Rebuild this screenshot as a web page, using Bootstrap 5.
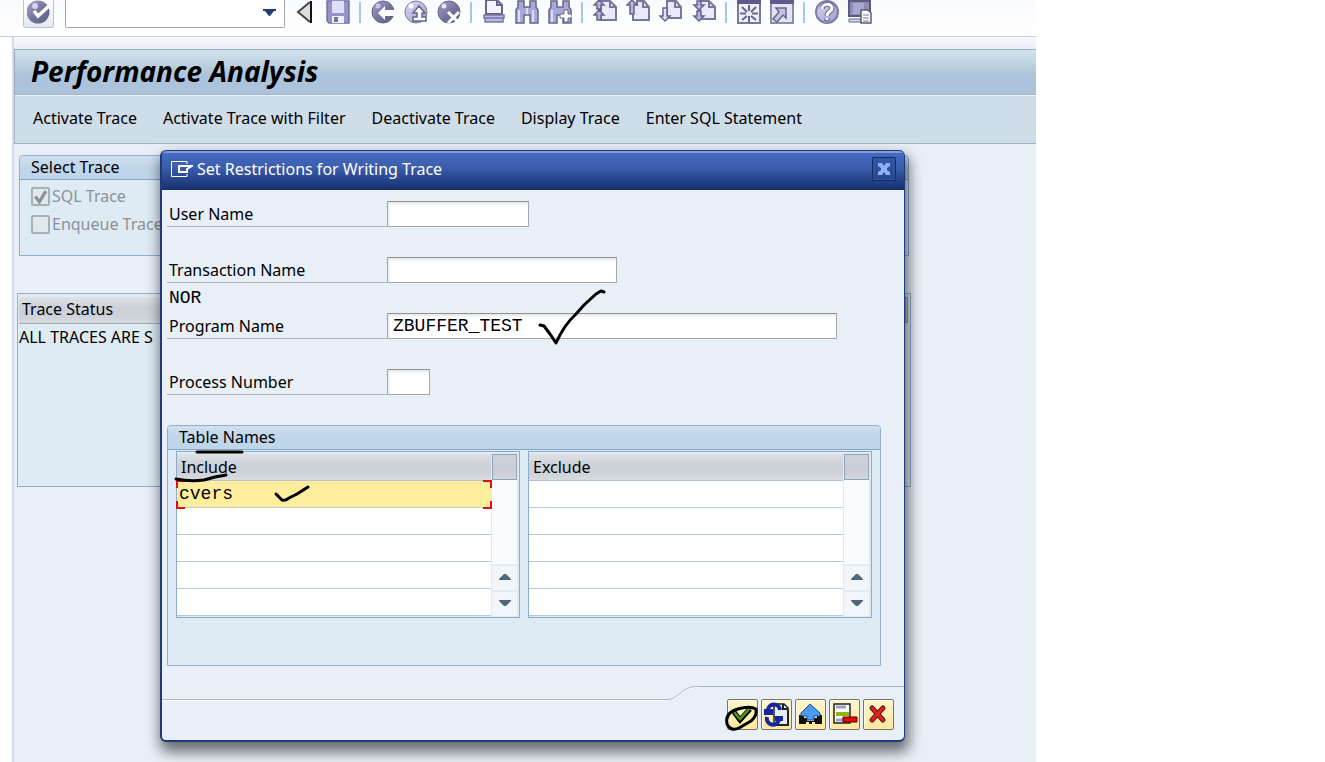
<!DOCTYPE html>
<html lang="en">
<head>
<meta charset="utf-8">
<meta name="viewport" content="width=device-width, initial-scale=1">
<title>Performance Analysis</title>
<link href="https://cdn.jsdelivr.net/npm/bootstrap@5.3.0/dist/css/bootstrap.min.css" rel="stylesheet">
<style>
  body { font: 16px/24px "Noto Sans", sans-serif; color: #000; background: #fff; }
  button { color: inherit; }
  .app-window { max-width: 1036px; min-height: 100vh; background: #fff; }
  .mono { font-family: "Liberation Mono", monospace; font-size: 18px; }

  /* system toolbar */
  .sys-bar { height: 37px; padding: 0 0 9px 23px; border-bottom: 1px solid #c5cfdf; background: linear-gradient(#f8fafd, #fff); }
  .tool { width: 33px; height: 28px; padding: 0 0 4px; border: 0; border-radius: 0; }
  .tool svg { width: 24px; height: 24px; display: block; margin: auto; }
  .ok-tool { width: 31px; border: 1px solid #b9c3d6; border-top: 0; border-radius: 0 0 3px 3px; background: linear-gradient(#fff, #e4eaf3); }
  .tool-sep { width: 2px; height: 21px; margin: 2px 5px 0; background: #a4c8e4; }
  .command { width: 220px; height: 28px; margin: 0 3px 0 11px; border: 1px solid #a3a6ac; border-top: 0; border-radius: 0 0 2px 2px; background: #fff; }
  .command input { min-width: 0; border: 0; outline: 0; background: none; }
  .command .btn { width: 29px; padding: 0 4px 4px 0; border: 0; line-height: 20px; }

  /* work area */
  .work { margin-left: 12px; border-left: 2px solid #d3dbe7; background: #e8eff6; }
  .work-edge { height: 12px; background: linear-gradient(#f6f9fc, #e9eff6); }
  .title-bar { height: 45px; padding-left: 16px; border-top: 1px solid #98aac2; border-left: 1px solid #98aac2; background: linear-gradient(#d3e2ee, #b4cad9 48%, #adc4dd 55%, #adc2db); }
  .title-bar h1 { font-size: 28px; line-height: 42px; font-weight: 700; font-style: italic; }
  .app-bar { height: 50px; padding: 0 0 2px 5px; border: 1px solid #a3b3ca; border-right: 0; background: #cfdde8; box-shadow: inset 0 1px #eef4f9; }
  .app-bar .btn { padding: 0 13px; border: 0; color: #000; font-size: 16px; line-height: 24px; }

  .group { border: 1px solid #92afcd; border-radius: 4px 4px 0 0; background: #deebf4; }
  .group-title { height: 24px; padding-left: 11px; border-bottom: 1px solid #86a5c6; border-radius: 4px 4px 0 0; background: linear-gradient(#cfdff0, #c0d6ea 50%, #bfd5e9); font-size: 16px; line-height: 23px; }
  .select-trace { height: 101px; margin: 11px 127px 0 5px; }
  .select-trace .form-check { height: 28px; margin: 0; padding: 0 0 0 11px; }
  .select-trace .form-check-input { float: none; width: 19px; height: 19px; margin: 0 0 2px; border: 2px solid #a9afb5; border-radius: 2px; background-color: #dfe8ef; }
  .select-trace .form-check-input:disabled { opacity: 1; }
  .select-trace .form-check-input:checked { background-size: 17px; background-image: url("data:image/svg+xml,%3Csvg xmlns='http://www.w3.org/2000/svg' viewBox='0 0 16 16'%3E%3Cpath d='M3 8l4 5 6-10' fill='none' stroke='%238b9095' stroke-width='3'/%3E%3C/svg%3E"); }
  .select-trace .form-check-input:disabled ~ .form-check-label { color: #8b9197; opacity: 1; padding-left: 2px; }
  .trace-status { height: 194px; margin: 37px 125px 0 3px; padding: 3px 2px 3px 1px; border: 1px solid #92afcd; }
  .list-head { background: linear-gradient(#dfe1e3, #cdd2da 40%, #cdd2da 70%, #d6dbde); font-weight: 400; }
  .trace-status .list-head { height: 26px; padding: 0 3px; border-bottom: 1px solid #9aa9bc; line-height: 25px; }
  .trace-status td { padding: 0; line-height: 26px; }
  .status-corner { width: 3px; height: 26px; border: 1px solid #92a2b4; background: #cbd1d9; }

  /* dialog */
  .restrict { left: 160px; top: 150px; width: 745px; border: 2px solid #20397a; border-width: 0 1px 2px 2px; border-radius: 6px; background: #e8eff6; box-shadow: 2px 8px 14px 2px rgba(0,0,0,.55); }
  .restrict-head { height: 40px; padding: 0 8px 4px 9px; border-top: 1px solid #1f3878; border-radius: 5px 5px 0 0; color: #fff; background: linear-gradient(#7e9fdc 2px, #456bc0 2px, #3b5eae 16px, #27468c 28px, #17306c); }
  .restrict-head h2 { font-size: 16px; line-height: 34px; padding-left: 4px; }
  .close-tool { width: 24px; height: 24px; padding: 0; border: 1px solid #142b66; border-radius: 1px; background: linear-gradient(#3558a6, #27458b); box-shadow: inset 0 0 0 1px #3154a2; }
  .restrict-form { padding: 11px 23px 0 5px; }
  .line { height: 28px; }
  .line label { width: 220px; height: 26px; padding-left: 2px; border-bottom: 1px solid #b1b4b7; line-height: 26px; }
  .line input { height: 26px; padding: 0 5px; border: 1px solid #a5a8ab; border-top-color: #8f9396; border-radius: 0; background: #fff; box-shadow: inset 1px 2px 2px #e6e8ea; outline: 0; }
  .line span { padding-left: 2px; }
  .line + .line.gap-line { margin-top: 28px; }
  .w-user { width: 142px; } .w-trans { width: 230px; } .w-prog { width: 450px; } .w-proc { width: 43px; }
  .tables { height: 241px; margin-top: 28px; }
  .tables-row { gap: 8px; padding: 1px 8px 0; }
  .list { height: 167px; padding: 2px 2px 1px 0; border: 1px solid #8fabca; }
  .list table { border-collapse: separate; border-spacing: 0; }
  .list th { height: 27px; padding: 0 4px; border-bottom: 1px solid #b6c1d1; line-height: 26px; }
  .list td { height: 27px; padding: 0; border-bottom: 1px solid #bcc7d6; background: #fff; }
  .list td input { display: block; width: 100%; height: 26px; padding: 0 2px; border: 0; outline: 0; background: none; }
  .list td.active-cell { background: #ffed9e; }
  .focus-marks { inset: -1px -1px -2px -1px; pointer-events: none;
    background:
      linear-gradient(#e20d0d 0 0) 0 0/9px 2px, linear-gradient(#e20d0d 0 0) 0 0/2px 8px,
      linear-gradient(#e20d0d 0 0) 100% 0/9px 2px, linear-gradient(#e20d0d 0 0) 100% 0/2px 8px,
      linear-gradient(#e20d0d 0 0) 0 100%/9px 2px, linear-gradient(#e20d0d 0 0) 0 100%/2px 8px,
      linear-gradient(#e20d0d 0 0) 100% 100%/9px 2px, linear-gradient(#e20d0d 0 0) 100% 100%/2px 8px;
    background-repeat: no-repeat; }
  .scroll { width: 25px; margin-left: 1px; background: #f8fafc; }
  .scroll .btn { height: 26px; padding: 0 0 2px; border: 0; border-top: 2px solid #e3ecf5; border-radius: 0; background: #f2f5fa; }
  .scroll .btn svg { display: block; margin: auto; }
  .scroll .corner { border: 1px solid #93a1b4; background: linear-gradient(#cfd3d9, #c8cdd5 60%, #d2d7db); }
  .shelf { height: 14px; margin-top: 20px; }
  .shelf-low { border-bottom: 1px solid #a9b7cc; box-shadow: 0 1px #fff; }
  .shelf-high { width: 204px; border-top: 1px solid #a9b7cc; }
  .actions { gap: 3px; padding: 0 10px 10px 0; margin-top: -1px; }
  .action { width: 31px; height: 31px; padding: 0; border: 1px solid #77756c; border-radius: 2px; background: linear-gradient(#fff6cf, #ffe89b); box-shadow: inset 1px 1px #fffbe6; }
  .action svg { width: 27px; height: 27px; display: block; margin: auto; }
  .ink { left: -2px; top: 0; width: 745px; height: 592px; pointer-events: none; }
</style>
</head>
<body>
<svg class="position-absolute" width="0" height="0" aria-hidden="true">
  <defs>
    <linearGradient id="orb" x1="0" y1="0" x2="1" y2="1"><stop offset="0" stop-color="#a5a6d3"/><stop offset=".5" stop-color="#77779f"/><stop offset="1" stop-color="#5d5d80"/></linearGradient>
    <linearGradient id="pale" x1="0" y1="0" x2="1" y2="1"><stop offset="0" stop-color="#d9d9fb"/><stop offset="1" stop-color="#9a9ac8"/></linearGradient>
  </defs>
</svg>
<div class="app-window position-relative d-flex flex-column overflow-hidden">
  <header class="sys-bar d-flex align-items-start">
    <button class="btn tool ok-tool" aria-label="Enter"><svg viewBox="0 0 24 24"><circle cx="11" cy="12" r="11.500" fill="url(#orb)"/><circle cx="8" cy="6" r="3" fill="#d4d4ef"/><path d="M7 11l4 5L22 6" fill="none" stroke="#fff" stroke-width="3.500"/></svg></button>
    <div class="command d-flex">
      <input class="flex-grow-1" type="text" aria-label="Command">
      <button class="btn" aria-label="History"><svg width="13" height="8" viewBox="0 0 13 8"><path d="M0 0h13v2h-2L7 7H6L2 2H0z" fill="#253c77"/></svg></button>
    </div>
    <button class="btn tool" aria-label="Collapse"><svg viewBox="0 0 24 24"><path d="M17 2v20L5 12z" fill="#ddd"/><path d="M18 1v22" stroke="#111" stroke-width="2"/><path d="M17 2L5 12l12 10" fill="none" stroke="#444" stroke-width="2"/></svg></button>
    <button class="btn tool" aria-label="Save"><svg viewBox="0 0 24 24"><path d="M1 1h22v22H3l-2-2z" fill="#9494c4" stroke="#73739c" stroke-width="1.500"/><path d="M6 1h12v12H6z" fill="#dedefa"/><path d="M6 16h12v7H6z" fill="#eeeefc"/><path d="M8 17h4v5H8z" fill="#73739c"/></svg></button>
    <span class="tool-sep"></span>
    <button class="btn tool" aria-label="Back"><svg viewBox="0 0 24 24"><circle cx="12" cy="12" r="11" fill="url(#orb)" stroke="#66668a"/><circle cx="7" cy="6" r="2.500" fill="#c8c8ef"/><path d="M7 13l7-7v4h10v6H14v4z" fill="#fff"/></svg></button>
    <button class="btn tool" aria-label="Exit"><svg viewBox="0 0 24 24"><circle cx="12" cy="12" r="11" fill="url(#pale)" stroke="#7c7ca4"/><circle cx="7" cy="6" r="2.500" fill="#fff"/><path d="M15 6l6 7h-3v4h4v4H9v-4h4v-4H9z" fill="#fff" stroke="#66668a" stroke-width="1.500"/></svg></button>
    <button class="btn tool" aria-label="Cancel"><svg viewBox="0 0 24 24"><circle cx="12" cy="12" r="11" fill="url(#orb)" stroke="#66668a"/><circle cx="7" cy="6" r="2.500" fill="#e5e5fa"/><path d="M11 12l11 11M22 12L11 23" stroke="#fff" stroke-width="3"/></svg></button>
    <span class="tool-sep"></span>
    <button class="btn tool" aria-label="Print"><svg viewBox="0 0 24 24"><path d="M4 0h11l5 5v9H4z" fill="#f4f4fe" stroke="#66668a" stroke-width="2"/><path d="M15 0v5h5" fill="none" stroke="#66668a" stroke-width="2"/><path d="M2 15h20v3H2zM3 18h18v4H3z" fill="#b8b8e6" stroke="#77779f" stroke-width="1.500"/></svg></button>
    <button class="btn tool" aria-label="Find"><svg viewBox="0 0 24 24"><path d="M3 1h6v6h6V1h6v6l2 3v13h-8v-8H9v8H1V10l2-3z" fill="#a9a9d8" stroke="#66668a" stroke-width="1.500"/><path d="M4 10v12M12 8v6M18 10v12" stroke="#dcdcfa" stroke-width="2"/></svg></button>
    <button class="btn tool" aria-label="Find next"><svg viewBox="0 0 24 24"><path d="M3 1h6v6h6V1h6v6l2 3v13h-8v-8H9v8H1V10l2-3z" fill="#a9a9d8" stroke="#66668a" stroke-width="1.500"/><path d="M4 10v12" stroke="#dcdcfa" stroke-width="2"/><path d="M16 10h4v4h4v4h-4v4h-4v-4h-4v-4h4z" fill="#fff" stroke="#66668a"/></svg></button>
    <span class="tool-sep"></span>
    <button class="btn tool" aria-label="First page"><svg viewBox="0 0 24 24"><path d="M8 1h9l6 6v13H8z" fill="#e9e9fc" stroke="#77779f" stroke-width="2"/><path d="M17 1v6h6" fill="none" stroke="#77779f" stroke-width="2"/><path d="M6 0l5 5H8v4H4V5H1zM6 10l5 5H8v5H4v-5H1z" fill="#b5b5e0" stroke="#66668a" stroke-width="1.500"/></svg></button>
    <button class="btn tool" aria-label="Previous page"><svg viewBox="0 0 24 24"><path d="M7 4h4V1h7l5 6v13H7z" fill="#e9e9fc" stroke="#77779f" stroke-width="2"/><path d="M17 1v6h6" fill="none" stroke="#77779f" stroke-width="2"/><path d="M6 0l5 5H8v9H4V5H1z" fill="#b5b5e0" stroke="#66668a" stroke-width="1.500"/></svg></button>
    <button class="btn tool" aria-label="Next page"><svg viewBox="0 0 24 24"><path d="M8 1h9l5 6v11H8z" fill="#e9e9fc" stroke="#77779f" stroke-width="2"/><path d="M16 1v6h6" fill="none" stroke="#77779f" stroke-width="2"/><path d="M6 21l5-5H8V8H4v8H1z" fill="#e2e2fa" stroke="#66668a" stroke-width="1.500"/></svg></button>
    <button class="btn tool" aria-label="Last page"><svg viewBox="0 0 24 24"><path d="M8 1h9l6 6v12H8z" fill="#e9e9fc" stroke="#77779f" stroke-width="2"/><path d="M17 1v6h6" fill="none" stroke="#77779f" stroke-width="2"/><path d="M7 10l5-5H9V1H5v4H2zM7 21l5-5H9v-5H5v5H2z" fill="#b5b5e0" stroke="#66668a" stroke-width="1.500"/></svg></button>
    <span class="tool-sep"></span>
    <button class="btn tool" aria-label="New session"><svg viewBox="0 0 24 24"><path d="M1 1h22v22H1z" fill="#eeeef8" stroke="#77779f" stroke-width="2"/><path d="M0 0h24v4H0z" fill="#5c5c8c"/><path d="M12 5v6M12 16v6M3 13.500h6M15 13.500h6M5 7l5 5M19 7l-5 5M5 20l5-4M19 20l-5-4" stroke="#66668a" stroke-width="2"/></svg></button>
    <button class="btn tool" aria-label="Shortcut"><svg viewBox="0 0 24 24"><path d="M1 1h22v22H1z" fill="#e3e3f3" stroke="#8c8cae" stroke-width="2"/><path d="M0 0h24v4H0z" fill="#5c5c8c"/><path d="M6 8h10v10l-3-3-6 7-4-3 6-7z" fill="#c2c2e4" stroke="#66668a" stroke-width="1.500"/></svg></button>
    <span class="tool-sep"></span>
    <button class="btn tool" aria-label="Help"><svg viewBox="0 0 24 24"><circle cx="12" cy="12" r="11" fill="url(#pale)" stroke="#7c7ca4" stroke-width="2"/><path d="M7 9c0-6 10-6 10-1 0 4-5 3-5 8M12 18v3" fill="none" stroke="#66668a" stroke-width="5"/><path d="M7 9c0-6 10-6 10-1 0 4-5 3-5 8M12 18v2" fill="none" stroke="#fff" stroke-width="3"/></svg></button>
    <button class="btn tool" aria-label="Layout"><svg viewBox="0 0 24 24"><path d="M1 1h21v15H1z" fill="#8d8db8" stroke="#5b5b80" stroke-width="2"/><path d="M5 3h11v11H5z" fill="#a8a8d2"/><path d="M1 19h12v3H1z" fill="#d5d5ed" stroke="#66668a"/><path d="M13 10h7l3 3v10H13z" fill="#fff" stroke="#5b5b70" stroke-width="1.500"/><path d="M15 15h6M15 18h6M15 21h6" stroke="#77778c"/></svg></button>
  </header>

  <main class="work flex-grow-1">
    <div class="work-edge"></div>
    <div class="title-bar"><h1 class="m-0">Performance Analysis</h1></div>
    <nav class="app-bar d-flex align-items-center" aria-label="Trace">
      <button class="btn">Activate Trace</button>
      <button class="btn">Activate Trace with Filter</button>
      <button class="btn">Deactivate Trace</button>
      <button class="btn">Display Trace</button>
      <button class="btn">Enter SQL Statement</button>
    </nav>
    <section class="group select-trace">
      <h2 class="group-title m-0 fw-normal">Select Trace</h2>
      <div class="select-options">
        <div class="form-check d-flex align-items-end"><input class="form-check-input" type="checkbox" id="sql" checked disabled><label class="form-check-label" for="sql">SQL Trace</label></div>
        <div class="form-check d-flex align-items-end"><input class="form-check-input" type="checkbox" id="enq" disabled><label class="form-check-label" for="enq">Enqueue Trace</label></div>
      </div>
    </section>
    <section class="group rounded-0 trace-status d-flex">
      <table class="w-100 align-self-start">
        <thead><tr><th class="list-head">Trace Status</th></tr></thead>
        <tbody><tr><td>ALL TRACES ARE S</td></tr></tbody>
      </table>
      <span class="status-corner"></span>
    </section>
  </main>

  <section class="restrict position-absolute" role="dialog" aria-labelledby="dlg-title">
    <header class="restrict-head d-flex align-items-center">
      <svg width="22" height="16" viewBox="0 0 22 16" fill="none" stroke="#fff"><path d="M16 3V.5H.5v15H16V13"/><path d="M8 5h13l-5 3v3H8z" stroke-width="2"/></svg>
      <h2 id="dlg-title" class="m-0 fw-normal flex-grow-1">Set Restrictions for Writing Trace</h2>
      <button class="btn close-tool d-flex align-items-center justify-content-center" aria-label="Close"><svg width="12" height="12" viewBox="0 0 12 12"><path d="M0 0h4l2 3 2-3h4v3L9 5v2l3 2v3H8L6 9l-2 3H0V9l3-2V5L0 3z" fill="#8fb0fa"/></svg></button>
    </header>
    <form class="restrict-form">
      <div class="line d-flex"><label for="user">User Name</label><input class="mono w-user" id="user" type="text"></div>
      <div class="line gap-line d-flex"><label for="trans">Transaction Name</label><input class="mono w-trans" id="trans" type="text"></div>
      <div class="line"><span class="mono">NOR</span></div>
      <div class="line d-flex"><label for="prog">Program Name</label><input class="mono w-prog" id="prog" type="text" value="ZBUFFER_TEST"></div>
      <div class="line gap-line d-flex"><label for="proc">Process Number</label><input class="mono w-proc" id="proc" type="text"></div>

      <section class="group tables">
        <h3 class="group-title m-0 fw-normal">Table Names</h3>
        <div class="tables-row d-flex">
          <div class="list d-flex flex-fill">
            <table class="flex-grow-1">
              <thead><tr><th class="list-head">Include</th></tr></thead>
              <tbody>
                <tr><td class="active-cell position-relative"><input class="mono" type="text" aria-label="Include 1" value="cvers"><span class="focus-marks position-absolute"></span></td></tr>
                <tr><td><input class="mono" type="text" aria-label="Include 2"></td></tr>
                <tr><td><input class="mono" type="text" aria-label="Include 3"></td></tr>
                <tr><td><input class="mono" type="text" aria-label="Include 4"></td></tr>
                <tr><td><input class="mono" type="text" aria-label="Include 5"></td></tr>
              </tbody>
            </table>
            <div class="scroll d-flex flex-column">
              <button type="button" class="btn corner" aria-label="Select include columns"></button>
              <button type="button" class="btn mt-auto" aria-label="Include up"><svg width="12" height="6"><path d="M5 0h2l5 5v1H0V5z" fill="#52667b"/></svg></button>
              <button type="button" class="btn" aria-label="Include down"><svg width="12" height="6"><path d="M0 0h12v1L7 6H5L0 1z" fill="#52667b"/></svg></button>
            </div>
          </div>
          <div class="list d-flex flex-fill">
            <table class="flex-grow-1">
              <thead><tr><th class="list-head">Exclude</th></tr></thead>
              <tbody>
                <tr><td><input class="mono" type="text" aria-label="Exclude 1"></td></tr>
                <tr><td><input class="mono" type="text" aria-label="Exclude 2"></td></tr>
                <tr><td><input class="mono" type="text" aria-label="Exclude 3"></td></tr>
                <tr><td><input class="mono" type="text" aria-label="Exclude 4"></td></tr>
                <tr><td><input class="mono" type="text" aria-label="Exclude 5"></td></tr>
              </tbody>
            </table>
            <div class="scroll d-flex flex-column">
              <button type="button" class="btn corner" aria-label="Select exclude columns"></button>
              <button type="button" class="btn mt-auto" aria-label="Exclude up"><svg width="12" height="6"><path d="M5 0h2l5 5v1H0V5z" fill="#52667b"/></svg></button>
              <button type="button" class="btn" aria-label="Exclude down"><svg width="12" height="6"><path d="M0 0h12v1L7 6H5L0 1z" fill="#52667b"/></svg></button>
            </div>
          </div>
        </div>
      </section>
    </form>
    <div class="shelf d-flex">
      <div class="shelf-low flex-grow-1"></div>
      <svg width="32" height="14" viewBox="0 0 32 14" fill="none"><path d="M0 14.500c10 0 14-13 28-13h4" stroke="#fff"/><path d="M0 13.500c10 0 14-13 28-13h4" stroke="#a9b7cc"/></svg>
      <div class="shelf-high"></div>
    </div>
    <footer class="actions d-flex justify-content-end">
      <button class="btn action" aria-label="Continue"><svg viewBox="0 0 27 27"><path d="M5 11l6 8L21 8" fill="none" stroke="#000" stroke-width="5"/><path d="M5 11l6 7L21 7" fill="none" stroke="#4f9a12" stroke-width="2.500"/></svg></button>
      <button class="btn action" aria-label="Refresh"><svg viewBox="0 0 27 27"><path d="M11 3h10l4 4v17H11z" fill="#e8ecf6" stroke="#1b1f2e" stroke-width="1.500"/><path d="M20 3v5h5M14 24h11V9" fill="none" stroke="#1b1f2e" stroke-width="2"/><path d="M17 9A6 6 0 0 0 5 10M4 16a6 6 0 0 0 12 3" fill="none" stroke="#1426a0" stroke-width="4"/><path d="M1 8h9v6H1zM12 15h8v5h-8z" fill="#1426a0"/></svg></button>
      <button class="btn action" aria-label="Get variant"><svg viewBox="0 0 27 27"><path d="M2 14h5v3h3v3h7v-3h3v-3h5v9h-7v-2h-3v2h-3v-2H9v2H2z" fill="#111"/><path d="M13 3l10 9v3h-6v4H10v-4H4v-3z" fill="#4b9cf0" stroke="#174d9c"/></svg></button>
      <button class="btn action" aria-label="Delete row"><svg viewBox="0 0 27 27"><path d="M3 3h16v19H3z" fill="#fff" stroke="#222" stroke-width="1.500"/><path d="M5 6h10M5 19h7" stroke="#9aa3c4" stroke-width="3"/><path d="M5 11h13v4H5z" fill="#8fb514"/><path d="M12 16h14v5H12z" fill="#f00" stroke="#400"/></svg></button>
      <button class="btn action" aria-label="Cancel dialog"><svg viewBox="0 0 27 27" stroke-linecap="round"><path d="M7 7l11 12M18 7L7 19" stroke="#5c1210" stroke-width="5"/><path d="M7 7l11 12M18 7L7 19" stroke="#e52020" stroke-width="3"/></svg></button>
    </footer>

    <svg class="ink position-absolute" viewBox="160 150 745 592" fill="none" stroke="#000" stroke-width="3" stroke-linecap="round" stroke-linejoin="round" aria-hidden="true">
      <path d="M540 325l4 1 6 8 6 9q8-18 20-29l8-9 12-11 5-3 3 1"/>
      <path d="M197 452h45"/>
      <path d="M176 479q14 3 28 1l11-3 11-2"/>
      <path d="M276 494l6 6q4 1 7-2l8-4 11-7"/>
      <path d="M756 709q-7-4-21 1-10 4-8 14 4 8 12 4l12-7q6-5 5-11z"/>
    </svg>
  </section>
</div>
<script src="https://cdn.jsdelivr.net/npm/bootstrap@5.3.0/dist/js/bootstrap.bundle.min.js"></script>
</body>
</html>
